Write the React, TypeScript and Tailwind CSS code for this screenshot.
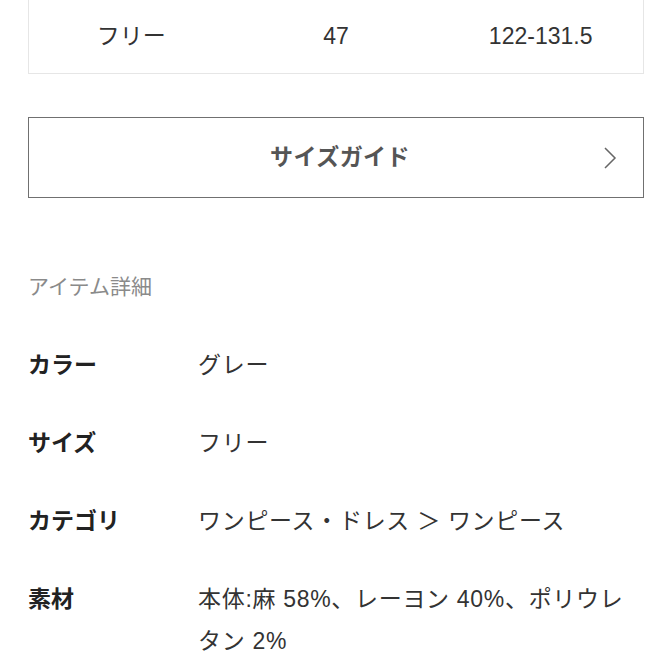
const font = {
  fontFamily: '"Liberation Sans", "Noto Sans CJK JP", "Noto Sans", sans-serif',
};

const details = [
  { label: "カラー", value: "グレー" },
  { label: "サイズ", value: "フリー" },
  { label: "カテゴリ", value: "ワンピース・ドレス ＞ ワンピース" },
  { label: "素材", value: "本体:麻 58%、レーヨン 40%、ポリウレタン 2%" },
];

function SizeRow() {
  return (
    <div className="grid grid-cols-3 h-[74px] items-center border-x border-b border-[#e6e6e6] text-[23px] text-[#333] text-center">
      <span>フリー</span>
      <span>47</span>
      <span>122-131.5</span>
    </div>
  );
}

function SizeGuideButton() {
  return (
    <button className="mt-[43px] relative flex items-center justify-center w-full h-[81px] border-[1.5px] border-[#707070] bg-white">
      <span className="pl-[8px] text-[23px] font-bold text-[#555] tracking-[0.02em]">
        サイズガイド
      </span>
      <svg
        className="absolute right-[26px] top-1/2 -translate-y-1/2"
        width="14"
        height="24"
        viewBox="0 0 14 24"
        fill="none"
      >
        <polyline
          points="2,2 12,12 2,22"
          stroke="#666"
          strokeWidth="1.5"
          strokeLinejoin="miter"
        />
      </svg>
    </button>
  );
}

export default function App() {
  return (
    <div className="w-[667px] h-[667px] overflow-hidden bg-white pl-[28px] pr-[23px]" style={font}>
      <SizeRow />
      <SizeGuideButton />
      <div className="mt-[68px] flex flex-col gap-[36px] leading-[42px]">
        <p className="text-[21px] text-[#8a8a8a]">アイテム詳細</p>
        {details.map((d) => (
          <div key={d.label} className="grid grid-cols-[170px_1fr] text-[23px]">
            <span className="font-bold text-[#222]">{d.label}</span>
            <span className="text-[#333] tracking-[0.03em]">{d.value}</span>
          </div>
        ))}
      </div>
    </div>
  );
}
